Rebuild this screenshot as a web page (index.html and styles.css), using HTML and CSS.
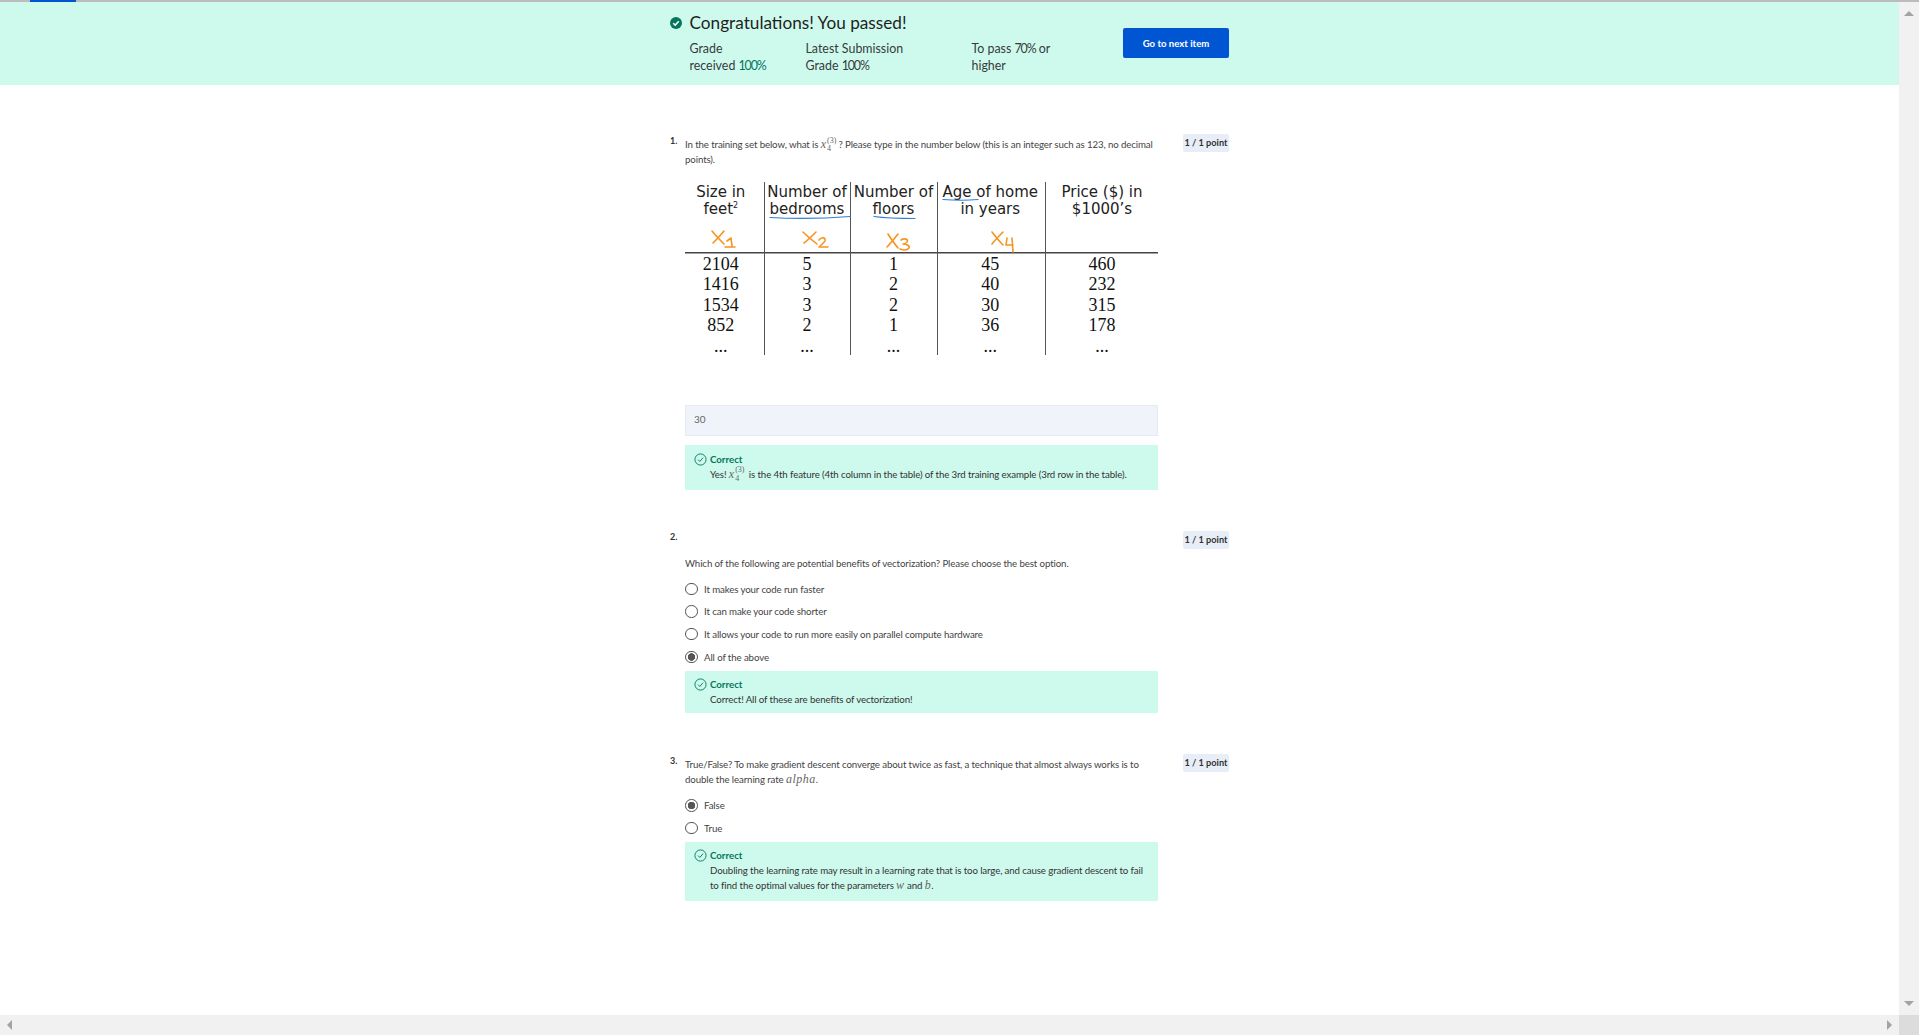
FILE: index.html
```html
<!DOCTYPE html>
<html lang="en">
<head>
<meta charset="utf-8">
<title>Quiz result</title>
<link rel="stylesheet" href="styles.css">
</head>
<body>
<div class="app">
  <div class="tab-indicator"></div>
  <main class="page">
    <section class="banner">
      <div class="banner-inner">
        <svg class="pass-icon" viewBox="0 0 12 12"><circle cx="6" cy="6" r="6" fill="#06755e"/><path d="M3.2 6.2 5.2 8.1 8.8 4.2" fill="none" stroke="#fff" stroke-width="1.5"/></svg>
        <div class="banner-main">
          <h1 class="banner-title">Congratulations! You passed!</h1>
          <div class="banner-stats">
            <div class="stat stat-a">Grade<br>received <span class="green num">100%</span></div>
            <div class="stat stat-b">Latest Submission<br>Grade <span class="num">100%</span></div>
            <div class="stat stat-c">To pass <span class="num">70%</span> or<br>higher</div>
          </div>
        </div>
        <button class="next-btn">Go to next item</button>
      </div>
    </section>

    <div class="quiz">
      <article class="q q1">
        <div class="q-num n1">1.</div>
        <div class="q-body">
          <p class="q-text">In the training set below, what is <span class="math">x<span class="scripts"><span>(3)</span><span>4</span></span></span>? Please type in the number below (this is an integer such as 123, no decimal points).</p>
          <div class="table-figure">
            <div class="tbl">
              <div class="th first">Size in<br>feet<sup>2</sup></div>
              <div class="th">Number of<br>bedrooms</div>
              <div class="th">Number of<br>floors</div>
              <div class="th age">Age of home<br>in years</div>
              <div class="th">Price ($) in<br>$1000’s</div>
              <div class="td first">2104<br>1416<br>1534<br>852<br>...</div>
              <div class="td">5<br>3<br>3<br>2<br>...</div>
              <div class="td">1<br>2<br>2<br>1<br>...</div>
              <div class="td age">45<br>40<br>30<br>36<br>...</div>
              <div class="td">460<br>232<br>315<br>178<br>...</div>
            </div>
            <svg class="ink" viewBox="0 0 473 176">
              <g class="ink-blue">
                <path d="M85 37.5C110 39 140 38.5 165 36.5"/>
                <path d="M189 36.5C203 38.5 217 38.5 230 38.5"/>
                <path d="M258 19.5C270 20.5 282 20.5 293 19.5"/>
              </g>
              <g class="ink-orange">
                <path d="M27 51C31 56 35 60 39 64M39 51C35 56 31 60 28 63"/>
                <path d="M42 61 46 58 47 66M40 67H50"/>
                <path d="M118 52C122 56 127 60 132 64M131 52C127 56 123 60 119 63"/>
                <path d="M134 60C137 56 141 58 140 61 139 63 136 65 134 67H143"/>
                <path d="M203 54C206 59 209 63 213 68M213 54C209 59 206 63 202 67"/>
                <path d="M216 60C219 58 224 59 222 62 221 64 219 64 218 64 222 64 225 66 224 68 222 71 218 70 215 69"/>
                <path d="M307 52C310 56 314 61 318 65M318 52C314 56 310 60 307 64"/>
                <path d="M322 58 321 65H328M327 58 328 72"/>
              </g>
            </svg>
          </div>
          <div class="answer-input">30</div>
          <div class="feedback">
            <svg class="ok-icon" viewBox="0 0 14 14"><circle cx="7" cy="7" r="6" fill="none" stroke="#06755e"/><path d="M4.3 7.1 6.3 9.1 9.8 5" fill="none" stroke="#06755e"/></svg>
            <div>
              <div class="fb-title">Correct</div>
              <div class="fb-text">Yes! <span class="math">x<span class="scripts"><span>(3)</span><span>4</span></span></span> is the 4th feature (4th column in the table) of the 3rd training example (3rd row in the table).</div>
            </div>
          </div>
        </div>
        <div class="pts">1 / 1 point</div>
      </article>

      <article class="q q2">
        <div class="q-num n2">2.</div>
        <div class="q-body spaced">
          <p class="q-text">Which of the following are potential benefits of vectorization? Please choose the best option.</p>
          <ul class="opts">
            <li class="opt"><span class="radio"></span>It makes your code run faster</li>
            <li class="opt"><span class="radio"></span>It can make your code shorter</li>
            <li class="opt"><span class="radio"></span>It allows your code to run more easily on parallel compute hardware</li>
            <li class="opt"><span class="radio on"></span>All of the above</li>
          </ul>
          <div class="feedback">
            <svg class="ok-icon" viewBox="0 0 14 14"><circle cx="7" cy="7" r="6" fill="none" stroke="#06755e"/><path d="M4.3 7.1 6.3 9.1 9.8 5" fill="none" stroke="#06755e"/></svg>
            <div>
              <div class="fb-title">Correct</div>
              <div class="fb-text">Correct! All of these are benefits of vectorization!</div>
            </div>
          </div>
        </div>
        <div class="pts">1 / 1 point</div>
      </article>

      <article class="q q3">
        <div class="q-num n1">3.</div>
        <div class="q-body">
          <p class="q-text">True/False? To make gradient descent converge about twice as fast, a technique that almost always works is to double the learning rate <span class="math big">alpha</span>.</p>
          <ul class="opts">
            <li class="opt"><span class="radio on"></span>False</li>
            <li class="opt"><span class="radio"></span>True</li>
          </ul>
          <div class="feedback">
            <svg class="ok-icon" viewBox="0 0 14 14"><circle cx="7" cy="7" r="6" fill="none" stroke="#06755e"/><path d="M4.3 7.1 6.3 9.1 9.8 5" fill="none" stroke="#06755e"/></svg>
            <div>
              <div class="fb-title">Correct</div>
              <div class="fb-text">Doubling the learning rate may result in a learning rate that is too large, and cause gradient descent to fail to find the optimal values for the parameters <span class="math big">w</span> and <span class="math big">b</span>.</div>
            </div>
          </div>
        </div>
        <div class="pts">1 / 1 point</div>
      </article>
    </div>
  </main>

  <aside class="vbar"><span class="arrow up"></span><span class="arrow down"></span></aside>
  <div class="hbar"><span class="arrow left"></span><span class="arrow right"></span></div>
  <div class="corner"></div>
</div>
</body>
</html>
```

FILE: styles.css
```css
* { box-sizing: border-box; }
html, body { margin: 0; height: 100%; overflow: hidden; background: #fff; }
body { font-family: Lato, "Open Sans", sans-serif; color: #333; }

.app {
  position: relative;
  height: 100vh;
  display: grid;
  grid-template-columns: 1fr 20px;
  grid-template-rows: 1fr 20px;
  border-top: 2px solid #bcbcbc;
}
.tab-indicator {
  position: absolute;
  left: 30px;
  top: -2px;
  width: 46px;
  height: 2px;
  background: #0056d2;
}

.page { overflow: hidden; min-width: 0; }

/* banner */
.banner { height: 83px; background: #cefaed; }
.banner-inner {
  width: 559px;
  margin: 0 auto;
  display: flex;
  align-items: flex-start;
}
.pass-icon { width: 12px; height: 12px; margin-top: 15px; flex: none; }
.banner-main { margin-left: 7.5px; width: 433.5px; }
.banner-title {
  margin: 0;
  padding-top: 9px;
  font-size: 17.2px;
  line-height: 24px;
  font-weight: 400;
  color: #1f1f1f;
}
.banner-stats { display: flex; margin-top: 5px; font-size: 12.4px; line-height: 17px; color: #373a3c; }
.stat-a { width: 116px; }
.stat-b { width: 166px; }
.green { color: #06755e; }
.num { letter-spacing: -1.1px; }
.next-btn {
  margin-top: 26px;
  width: 106px;
  height: 30px;
  flex: none;
  border: 0;
  border-radius: 2px;
  background: #0056d2;
  color: #fff;
  font: 700 9.6px/30px Lato, sans-serif;
  padding: 1px 0 0;
}

/* quiz */
.quiz { width: 559px; margin: 0 auto; padding-top: 49px; }
.q { display: grid; grid-template-columns: 15px 473px 1fr; align-items: start; }
.q2, .q3 { margin-top: 41px; }
.q-num { font-size: 9px; font-weight: 700; line-height: 12px; color: #333; }
.n1 { padding-top: 1px; }
.q-body { padding-top: 3px; }
.q-body.spaced { padding-top: 25px; }
.q-text { margin: 0; font-size: 9.7px; letter-spacing: -.115px; line-height: 15px; color: #444; }
.pts {
  justify-self: end;
  width: 46px;
  height: 18px;
  border-radius: 2px;
  background: #e8eef7;
  font-size: 9.2px;
  font-weight: 700;
  line-height: 18px;
  text-align: center;
  color: #333;
  white-space: nowrap;
}

.math { font-family: "Liberation Serif", serif; font-style: italic; font-size: 12px; color: #666; letter-spacing: 0; }
.math.big { letter-spacing: .5px; }
.scripts {
  display: inline-flex;
  flex-direction: column;
  vertical-align: middle;
  font-size: 8px;
  line-height: 8.5px;
  font-style: normal;
  margin: -5px 2px -5px 1px;
  height: 17px;
}

/* table figure */
.table-figure { position: relative; margin-top: 12.5px; width: 473px; height: 176px; }
.tbl {
  display: grid;
  grid-template-columns: 78.5px 86px 87px 108.5px 113px;
  grid-template-rows: 71px 102px;
  padding-top: 2px;
  height: 175px;
  background: linear-gradient(#444, #444) 0 72px / 100% 1.5px no-repeat;
  text-align: center;
}
.th, .td { border-left: 1.5px solid #555; }
.first { border-left: 0; padding-right: 7px; }
.age { padding-right: 2px; }
.th { font-family: "DejaVu Sans", sans-serif; font-size: 15px; line-height: 17.5px; color: #222; padding-top: 2px; white-space: nowrap; }
.th sup { font-size: 8px; line-height: 0; }
.td { font-family: "Liberation Serif", serif; font-size: 18px; line-height: 20.5px; color: #111; padding-top: 1px; white-space: nowrap; }
.ink { position: absolute; inset: 0; width: 473px; height: 176px; }
.ink path { fill: none; stroke-linecap: round; stroke-linejoin: round; }
.ink-blue path { stroke: #2f7fd6; stroke-width: 1.2; }
.ink-orange path { stroke: #f7931e; stroke-width: 1.6; }

/* answer */
.answer-input {
  margin-top: 49px;
  height: 31px;
  padding-left: 8px;
  background: #f0f4fa;
  border: 1px solid #e5ebf5;
  font-size: 10px;
  line-height: 27px;
  color: #666;
}
.feedback {
  display: flex;
  align-items: flex-start;
  margin-top: 9px;
  padding: 7px 8px 8px;
  background: #cefaed;
}
.ok-icon { width: 13px; height: 13px; flex: none; margin: 1px 3px 0 1px; }
.fb-title { font-size: 9.7px; line-height: 15px; font-weight: 700; color: #06755e; }
.fb-text { font-size: 9.7px; letter-spacing: -.115px; line-height: 15px; color: #333; }

/* options */
.opts { list-style: none; margin: 7px 0 0; padding: 0; }
.opt { display: flex; align-items: center; height: 22.67px; font-size: 9.7px; letter-spacing: -.115px; color: #444; }
.radio {
  width: 12.5px;
  height: 12.5px;
  margin-right: 6.5px;
  border: 1.5px solid #555;
  border-radius: 50%;
  background: #fff;
  flex: none;
}
.radio.on { background: radial-gradient(circle, #555 0 3.5px, #fff 4px); }
.q2 .feedback { margin-top: 3px; padding: 6px 8px 0; height: 42px; }
.q3 .opts { margin-top: 7px; }
.q3 .feedback { margin-top: 3px; padding: 6px 8px 0; height: 59px; }

/* scrollbars */
.vbar, .hbar { background: #f1f1f1; display: flex; justify-content: space-between; align-items: center; }
.vbar { flex-direction: column; padding: 9px 0; }
.hbar { padding: 0 7px; }
.corner { background: #dcdcdc; }
.arrow { width: 0; height: 0; border: 5px solid transparent; display: block; }
.arrow.up { border-top: 0; border-bottom-color: #a3a3a3; }
.arrow.down { border-bottom: 0; border-top-color: #a3a3a3; }
.arrow.left { border-left: 0; border-right-color: #a3a3a3; }
.arrow.right { border-right: 0; border-left-color: #a3a3a3; }
```
